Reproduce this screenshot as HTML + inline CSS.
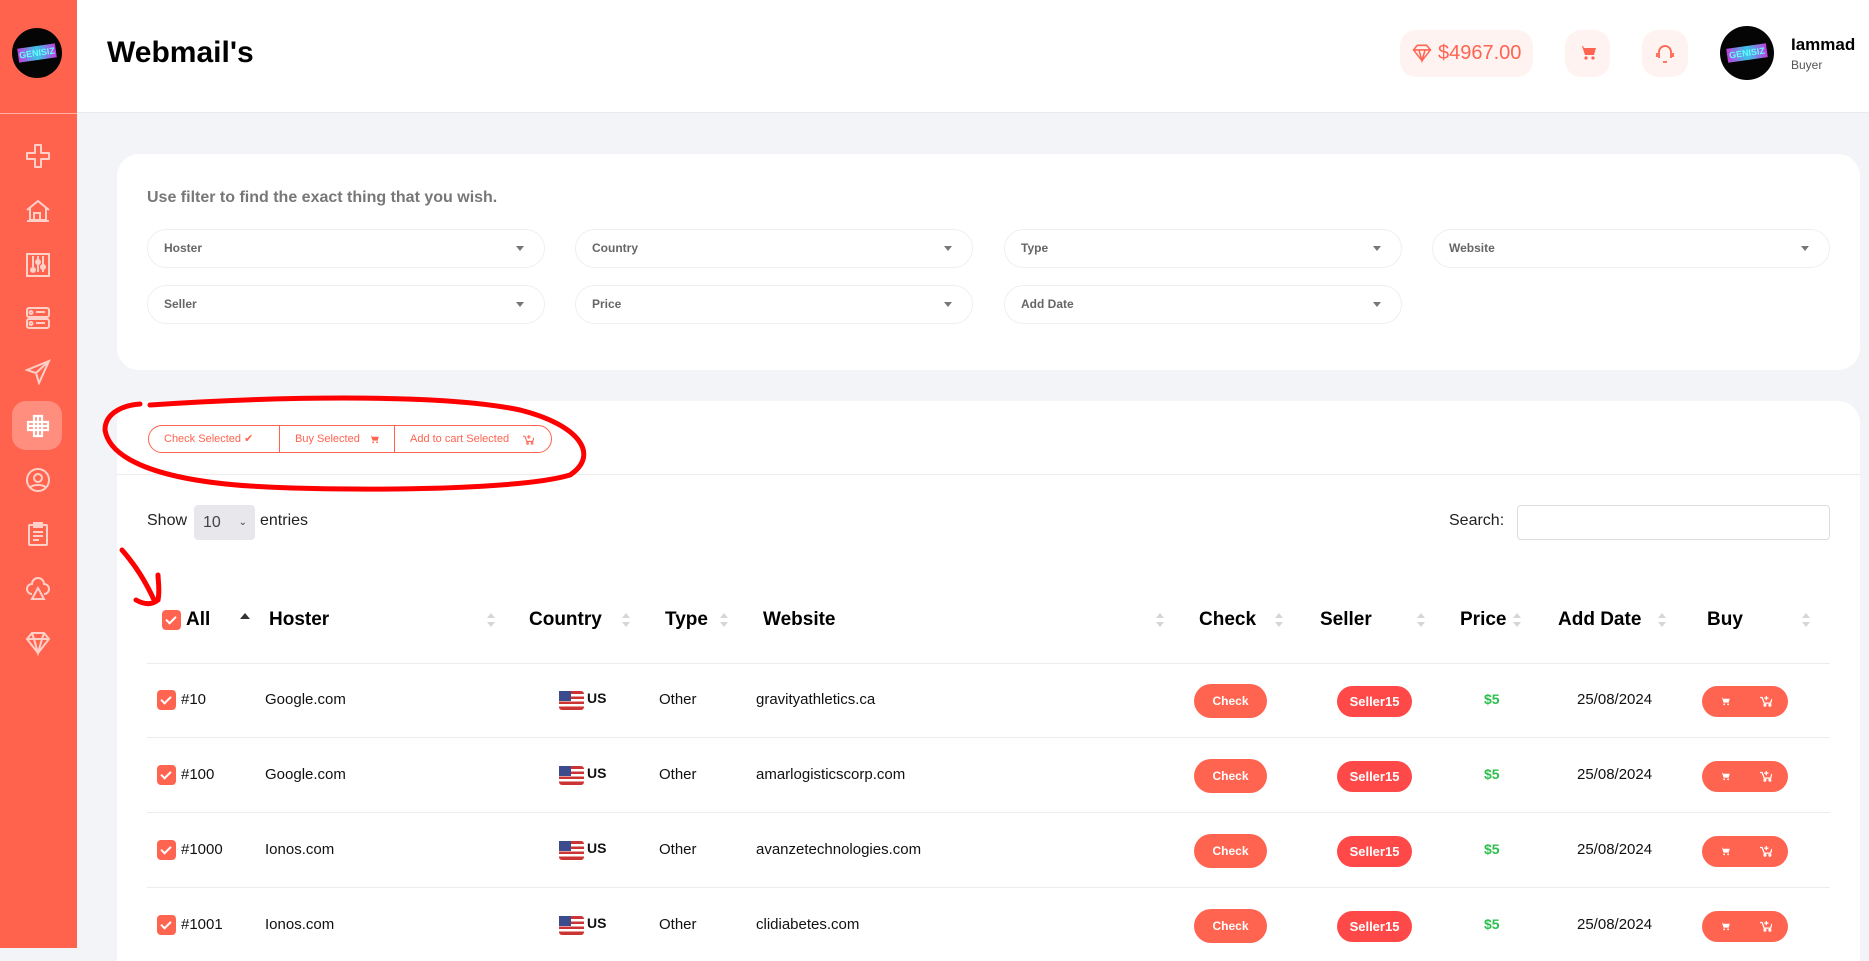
<!DOCTYPE html>
<html><head><meta charset="utf-8"><style>
*{box-sizing:border-box;margin:0;padding:0}
body{width:1869px;height:948px;overflow:hidden;background:#f3f4f8;font-family:"Liberation Sans",sans-serif;position:relative;color:#111}
.a{position:absolute}
.sb{left:0;top:0;width:77px;height:948px;background:#ff634e}
.hd{left:77px;top:0;width:1792px;height:113px;background:#fff;border-bottom:1px solid #e9eaee}
.ic{position:absolute;left:25px;width:26px;height:26px}
.card{background:#fff;border-radius:22px}
.sel{position:absolute;height:39px;border:1px solid #eeeff3;border-radius:20px;background:#fff;font-size:12px;font-weight:bold;color:#666;padding:0 16px;line-height:37px}
.sel:after{content:"";position:absolute;right:20px;top:16px;border:4px solid transparent;border-top:5px solid #777}
.th{position:absolute;top:609px;font-size:19px;font-weight:bold;color:#000}
.so{position:absolute;top:613px;width:9px;height:16px}
.so:before{content:"";position:absolute;left:0;top:0;border:4.5px solid transparent;border-bottom:5px solid #d6d6d6;border-top:0}
.so:after{content:"";position:absolute;left:0;top:9px;border:4.5px solid transparent;border-top:5px solid #d6d6d6;border-bottom:0}
.td{position:absolute;font-size:15px;color:#111}
.cb{position:absolute;width:19px;height:20px;background:#ff6450;border-radius:4px}
.cb:after{content:"";position:absolute;left:6px;top:4px;width:4px;height:8px;border:solid #fff;border-width:0 2.5px 2.5px 0;transform:rotate(45deg)}
.btn{position:absolute;border-radius:17px;color:#fff;font-weight:bold;text-align:center}
.line{position:absolute;left:147px;width:1683px;height:1px;background:#ececec}
</style></head><body>
<div class="a sb">
  <div class="a" style="left:12px;top:28px;width:50px;height:50px;border-radius:50%;background:#050505;overflow:hidden">
    <div class="a" style="left:6px;top:18px;width:38px;height:14px;background:linear-gradient(90deg,#c13ee0,#39c6e8,#c13ee0);transform:rotate(-8deg);font-size:9px;font-weight:bold;color:#6ff;text-align:center;line-height:14px">GENISIZ</div>
  </div>
  <div class="a" style="left:0;top:113px;width:77px;height:1px;background:#ffb3a8"></div>
  <div class="a" style="left:12px;top:401px;width:50px;height:49px;border-radius:14px;background:#ff8e7e"></div>
  <svg class="ic" style="top:143px" viewBox="0 0 26 26" fill="none" stroke="#ffd0c8" stroke-width="2"><path d="M10 2h6v8h8v6h-8v8h-6v-8H2v-6h8z" stroke-linejoin="round"/></svg>
  <svg class="ic" style="top:198px" viewBox="0 0 26 26" fill="none" stroke="#ffd0c8" stroke-width="2"><path d="M2 12L13 3l11 9M5 10v12h16V10M9 22v-7h6v7M2 23h22"/></svg>
  <svg class="ic" style="top:252px" viewBox="0 0 26 26" fill="none" stroke="#ffd0c8" stroke-width="2"><rect x="2" y="2" width="22" height="22"/><path d="M8 4v16M13 4v16M18 4v16"/><circle cx="8" cy="18" r="2"/><circle cx="13" cy="10" r="2"/><circle cx="18" cy="15" r="2"/></svg>
  <svg class="ic" style="top:305px" viewBox="0 0 26 26" fill="none" stroke="#ffd0c8" stroke-width="2"><rect x="2" y="3" width="22" height="9" rx="2"/><rect x="2" y="14" width="22" height="9" rx="2"/><circle cx="6" cy="7.5" r="1.5"/><circle cx="6" cy="18.5" r="1.5"/><path d="M11 7h9M11 18h9"/></svg>
  <svg class="ic" style="top:359px" viewBox="0 0 26 26" fill="none" stroke="#ffd0c8" stroke-width="2"><path d="M24 2L2 11l9 3 3 10zM11 14L24 2"/></svg>
  <svg class="ic" style="top:413px" viewBox="0 0 26 26" fill="none" stroke="#fff" stroke-width="2.2"><path d="M9 3h8v6h6v8h-6v6H9v-6H3V9h6zM9 9h8v8H9zM13 3v20M3 13h20"/></svg>
  <svg class="ic" style="top:467px" viewBox="0 0 26 26" fill="none" stroke="#ffd0c8" stroke-width="2"><circle cx="13" cy="13" r="11"/><circle cx="13" cy="11" r="4"/><path d="M5 21c2-4 14-4 16 0"/></svg>
  <svg class="ic" style="top:521px" viewBox="0 0 26 26" fill="none" stroke="#ffd0c8" stroke-width="2"><rect x="4" y="4" width="18" height="20" rx="1"/><rect x="9" y="2" width="8" height="4"/><path d="M8 11h10M8 15h10M8 19h6"/></svg>
  <svg class="ic" style="top:576px" viewBox="0 0 26 26" fill="none" stroke="#ffd0c8" stroke-width="2"><path d="M7 18a5 5 0 010-10 6 6 0 0112 0 5 5 0 010 10"/><path d="M13 12l-6 11h12z"/></svg>
  <svg class="ic" style="top:630px" viewBox="0 0 26 26" fill="none" stroke="#ffd0c8" stroke-width="2"><path d="M7 3h12l5 6-11 14L2 9zM2 9h22M9 9l4 14 4-14M7 3l2 6M19 3l-2 6"/></svg>
</div>
<div class="a hd">
  <div class="a" style="left:30px;top:36px;font-size:30px;font-weight:bold;color:#000">Webmail's</div>
  <div class="a" style="left:1323px;top:30px;width:133px;height:47px;border-radius:16px;background:#fff3f1;color:#ff6450;font-size:20px;line-height:47px;padding-left:38px">$4967.00</div>
  <svg class="a" style="left:1335px;top:43px" width="20" height="20" viewBox="0 0 26 26" fill="none" stroke="#ff6450" stroke-width="2"><path d="M7 3h12l5 6-11 14L2 9zM2 9h22M9 9l4 14 4-14"/></svg>
  <div class="a" style="left:1488px;top:30px;width:45px;height:47px;border-radius:16px;background:#fff3f1"></div>
  <svg class="a" style="left:1502px;top:45px" width="17" height="16" viewBox="0 0 17 16" fill="#ff6450"><path d="M0 1h3l3 9h9l2-7H5L4 1z"/><circle cx="7" cy="13" r="1.6"/><circle cx="14" cy="13" r="1.6"/></svg>
  <div class="a" style="left:1565px;top:30px;width:46px;height:47px;border-radius:16px;background:#fff3f1"></div>
  <svg class="a" style="left:1577px;top:42px" width="22" height="22" viewBox="0 0 22 22" fill="none" stroke="#ff6450" stroke-width="1.8"><path d="M5 16V10a6 6 0 0112 0v6M3 11v4M19 11v4M9 20h4"/></svg>
  <div class="a" style="left:1643px;top:26px;width:54px;height:54px;border-radius:50%;background:#050505;overflow:hidden"><div class="a" style="left:7px;top:20px;width:40px;height:14px;background:linear-gradient(90deg,#c13ee0,#39c6e8,#c13ee0);transform:rotate(-8deg);font-size:9px;font-weight:bold;color:#6ff;text-align:center;line-height:14px">GENISIZ</div></div>
  <div class="a" style="left:1714px;top:35px;font-size:17px;font-weight:bold;color:#000">Iammad</div>
  <div class="a" style="left:1714px;top:58px;font-size:12px;color:#555">Buyer</div>
</div>

<div class="a card" style="left:117px;top:154px;width:1743px;height:216px"></div>
<div class="a" style="left:147px;top:189px;font-size:16px;font-weight:bold;color:#777">Use filter to find the exact thing that you wish.</div>
<div class="sel" style="left:147px;top:229px;width:398px">Hoster</div>
<div class="sel" style="left:575px;top:229px;width:398px">Country</div>
<div class="sel" style="left:1004px;top:229px;width:398px">Type</div>
<div class="sel" style="left:1432px;top:229px;width:398px">Website</div>
<div class="sel" style="left:147px;top:285px;width:398px">Seller</div>
<div class="sel" style="left:575px;top:285px;width:398px">Price</div>
<div class="sel" style="left:1004px;top:285px;width:398px">Add Date</div>

<div class="a card" style="left:117px;top:401px;width:1743px;height:560px;border-radius:22px 22px 0 0"></div>
<div class="a" style="left:148px;top:425px;width:404px;height:28px;border:1px solid #ff6450;border-radius:14px;font-size:11px;color:#ff6450;line-height:26px;overflow:hidden">
  <span class="a" style="left:15px">Check Selected ✔</span>
  <span class="a" style="left:130px;top:0;width:1px;height:28px;background:#ff6450"></span>
  <span class="a" style="left:146px">Buy Selected</span>
  <svg class="a" style="left:220px;top:9px" width="10" height="9" viewBox="0 0 17 16" fill="#ff6450"><path d="M0 1h3l3 9h9l2-7H5L4 1z"/><circle cx="7" cy="13" r="1.6"/><circle cx="14" cy="13" r="1.6"/></svg>
  <span class="a" style="left:245px;top:0;width:1px;height:28px;background:#ff6450"></span>
  <span class="a" style="left:261px">Add to cart Selected</span>
  <svg class="a" style="left:374px;top:8px" width="11" height="11" viewBox="0 0 17 16" fill="none" stroke="#ff6450" stroke-width="1.6"><path d="M0 3h3l3 8h9l2-6M9 1v6M6 4h6"/><circle cx="7" cy="14" r="1.3"/><circle cx="14" cy="14" r="1.3"/></svg>
</div>
<div class="a" style="left:117px;top:474px;width:1743px;height:1px;background:#ececec"></div>
<div class="a" style="left:147px;top:512px;font-size:16px;color:#222">Show</div>
<div class="a" style="left:194px;top:505px;width:61px;height:35px;background:#e8e8ec;border-radius:4px;font-size:16px;color:#444;line-height:35px;padding-left:9px">10<span style="position:absolute;right:8px;font-size:10px">⌄</span></div>
<div class="a" style="left:260px;top:512px;font-size:16px;color:#222">entries</div>
<div class="a" style="left:1449px;top:512px;font-size:16px;color:#222">Search:</div>
<div class="a" style="left:1517px;top:505px;width:313px;height:35px;border:1px solid #ddd;border-radius:4px;background:#fff"></div>

<div class="cb" style="left:162px;top:610px"></div>
<div class="th" style="left:186px">All</div>
<div class="a" style="left:240px;top:613px;border:5px solid transparent;border-bottom:6px solid #333;border-top:0"></div>
<div class="th" style="left:269px">Hoster</div><div class="so" style="left:487px"></div>
<div class="th" style="left:529px">Country</div><div class="so" style="left:622px"></div>
<div class="th" style="left:665px">Type</div><div class="so" style="left:720px"></div>
<div class="th" style="left:763px">Website</div><div class="so" style="left:1156px"></div>
<div class="th" style="left:1199px">Check</div><div class="so" style="left:1275px"></div>
<div class="th" style="left:1320px">Seller</div><div class="so" style="left:1417px"></div>
<div class="th" style="left:1460px">Price</div><div class="so" style="left:1513px"></div>
<div class="th" style="left:1558px">Add Date</div><div class="so" style="left:1658px"></div>
<div class="th" style="left:1707px">Buy</div><div class="so" style="left:1802px"></div>
<div class="line" style="top:663px"></div>

<div id="rows"></div>
<script>
var d=[["#10","Google.com","gravityathletics.ca"],["#100","Google.com","amarlogisticscorp.com"],["#1000","Ionos.com","avanzetechnologies.com"],["#1001","Ionos.com","clidiabetes.com"]];
var cart='<svg class="a" style="left:18px;top:11px" width="10" height="9" viewBox="0 0 17 16" fill="#fff"><path d="M0 1h3l3 9h9l2-7H5L4 1z"/><circle cx="7" cy="13" r="1.6"/><circle cx="14" cy="13" r="1.6"/></svg>';
var add='<svg class="a" style="left:58px;top:9px" width="12" height="12" viewBox="0 0 17 16" fill="none" stroke="#fff" stroke-width="1.8"><path d="M0 3h3l3 8h9l2-6M9 1v6M6 4h6"/><circle cx="7" cy="14" r="1.3"/><circle cx="14" cy="14" r="1.3"/></svg>';
var h="";
d.forEach(function(r,i){var c=700+i*75;
h+='<div class="cb" style="left:157px;top:'+(c-10)+'px"></div>';
h+='<div class="td" style="left:181px;top:'+(c-9)+'px">'+r[0]+'</div>';
h+='<div class="td" style="left:265px;top:'+(c-9)+'px">'+r[1]+'</div>';
h+='<svg class="a" style="left:559px;top:'+(c-9)+'px" width="25" height="19" viewBox="0 0 25 19"><rect width="25" height="19" rx="3" fill="#c33"/><rect y="3" width="25" height="2.5" fill="#fff"/><rect y="8" width="25" height="2.5" fill="#fff"/><rect y="13" width="25" height="2.5" fill="#fff"/><rect width="12" height="10" fill="#3b4b8c"/></svg>';
h+='<div class="td" style="left:587px;top:'+(c-10)+'px;font-weight:bold;font-size:14px">US</div>';
h+='<div class="td" style="left:659px;top:'+(c-9)+'px">Other</div>';
h+='<div class="td" style="left:756px;top:'+(c-9)+'px">'+r[2]+'</div>';
h+='<div class="btn" style="left:1194px;top:'+(c-16)+'px;width:73px;height:34px;background:#ff6450;font-size:12px;line-height:34px">Check</div>';
h+='<div class="btn" style="left:1337px;top:'+(c-14)+'px;width:75px;height:31px;background:#ff4848;font-size:13px;line-height:31px;border-radius:16px">Seller15</div>';
h+='<div class="td" style="left:1484px;top:'+(c-9)+'px;color:#2dbf4e;font-weight:bold;font-size:14px">$5</div>';
h+='<div class="td" style="left:1577px;top:'+(c-9)+'px">25/08/2024</div>';
h+='<div class="btn" style="left:1702px;top:'+(c-14)+'px;width:86px;height:31px;background:#ff6450;border-radius:16px">'+cart+add+'</div>';
if(i<3)h+='<div class="line" style="top:'+(c+37)+'px"></div>';
});
document.getElementById("rows").innerHTML=h;
</script>

<svg class="a" style="left:0;top:0;pointer-events:none" width="1869" height="948">
<path d="M150 405C300 395 450 395 520 410C580 425 600 455 570 475C520 490 350 492 250 486C160 480 110 460 105 430C105 412 125 405 140 404" fill="none" stroke="#f00" stroke-width="5" stroke-linecap="round"/>
<path d="M122 550C135 565 145 580 155 602M136 600C145 605 152 605 158 600C160 590 158 580 158 575" fill="none" stroke="#f00" stroke-width="5" stroke-linecap="round"/>
</svg>
</body></html>
